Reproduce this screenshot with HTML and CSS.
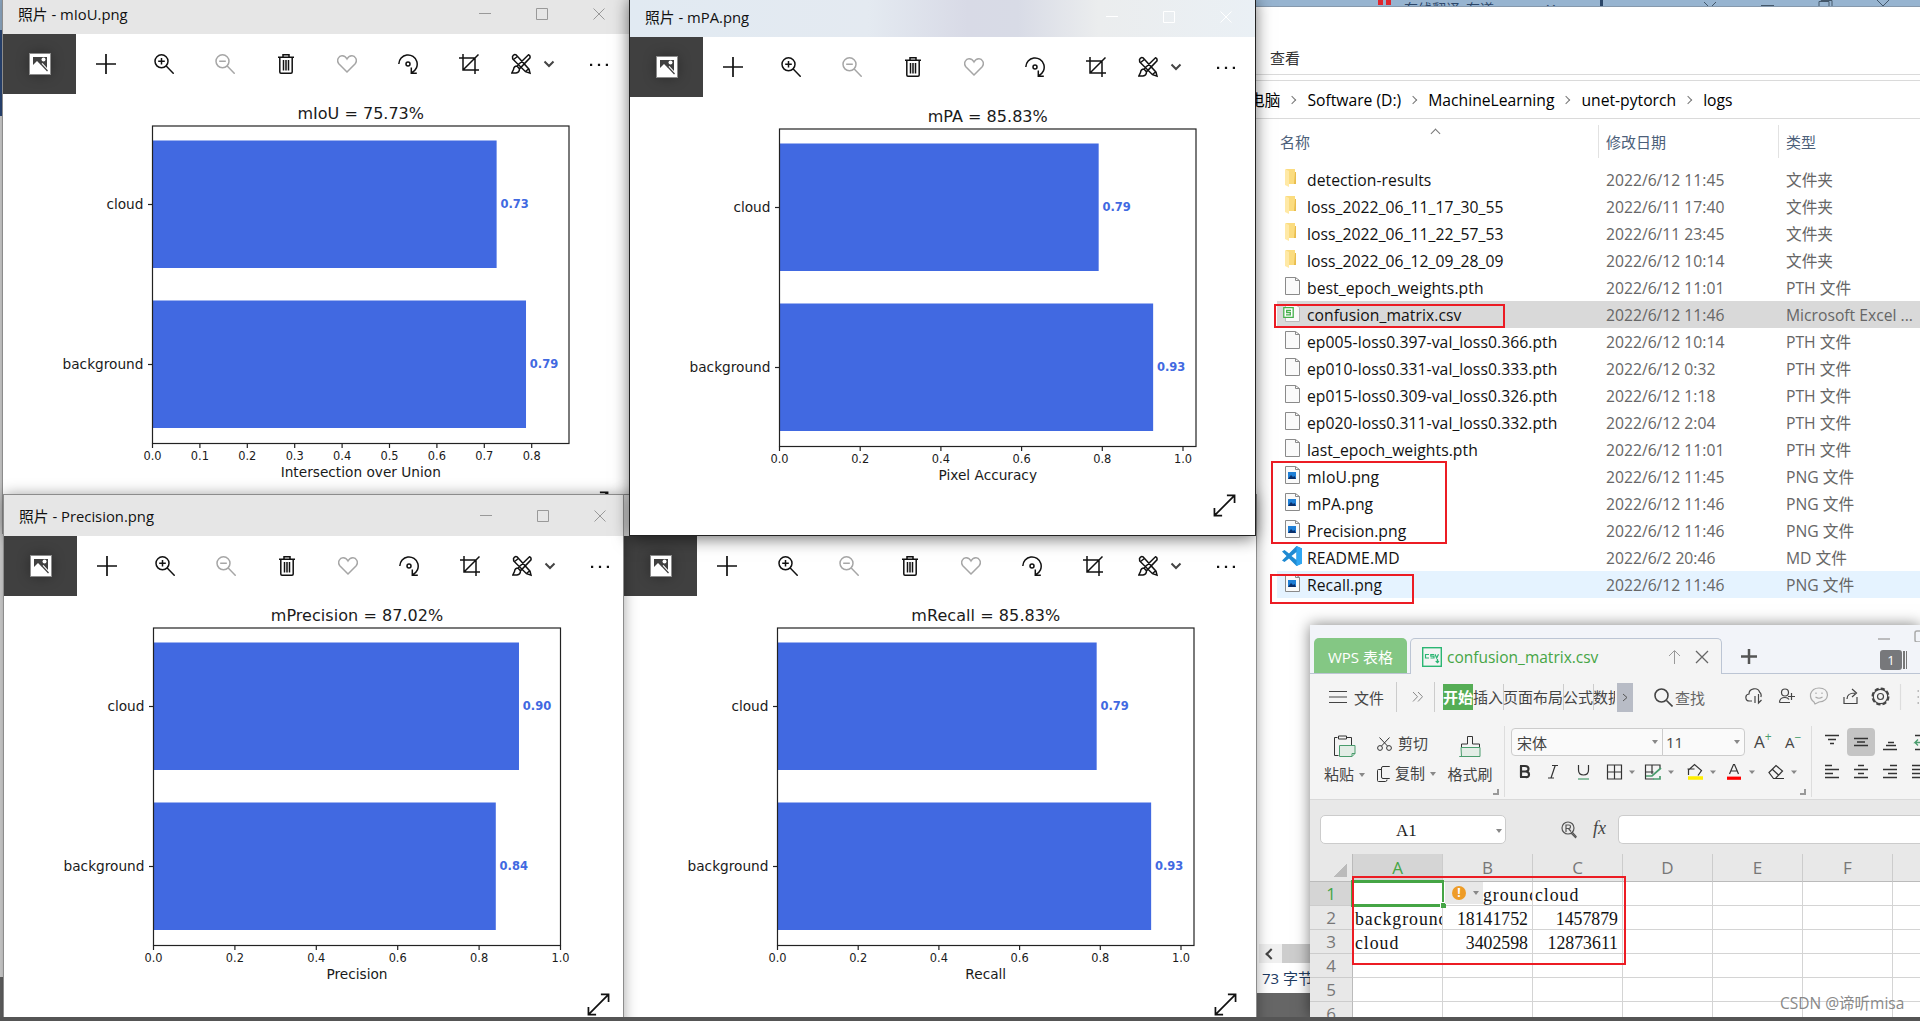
FILE: index.html
```html
<!DOCTYPE html>
<html lang="zh-CN">
<head>
<meta charset="UTF-8">
<meta name="viewport" content="width=device-width, initial-scale=1.0">
<title>unet-pytorch logs</title>
<link rel="stylesheet" href="styles.css">
</head>
<body>

<svg class="defs" width="0" height="0">
    <symbol id="i-photo" viewBox="0 0 20 20"><rect x="1" y="1" width="18" height="18" fill="#fff"/><path fill="#404040" d="M3 3h14v11l-4.500-5-2 1.500L7 7l-4 4z"/><circle cx="13.500" cy="5.500" r="2" fill="#fff"/><path d="M10.500 9.500l7 7.500" stroke="#404040" stroke-width="1.200"/></symbol>
    <symbol id="i-add" viewBox="0 0 20 20"><path d="M10 0v20M0 10h20" stroke-width="1.700"/></symbol>
    <symbol id="i-zoomin" viewBox="0 0 20 20"><circle cx="7.500" cy="7.300" r="6.500"/><path d="M12.200 12l7.500 7.700M7.500 4v6.600M4.200 7.300h6.600"/></symbol>
    <symbol id="i-zoomout" viewBox="0 0 20 20"><circle cx="7.500" cy="7.300" r="6.500"/><path d="M12.200 12l7.500 7.700M4.200 7.300h6.600"/></symbol>
    <symbol id="i-trash" viewBox="0 0 20 20"><path d="M2 3.200h16M7 3V.8h6V3M3.800 3.200V18q0 1.200 1.200 1.200h10q1.200 0 1.200-1.200V3.200M7.500 6v10.500M10 6v10.500M12.500 6v10.500"/></symbol>
    <symbol id="i-heart" viewBox="0 0 20 20"><path d="M10 18L1.800 9.700C-1 6 2 1.500 5.300 1.800 7.500 2 9 3.200 10 5c1-1.800 2.500-3 4.700-3.200C18 1.500 21 6 18.200 9.700z"/></symbol>
    <symbol id="i-rotate" viewBox="0 0 20 20"><path d="M.8 10A9.200 9.200 0 1 1 14 18.500M13.300 13.500v5.700h5.500"/><circle cx="10" cy="10" r="2"/></symbol>
    <symbol id="i-crop" viewBox="0 0 20 20"><path d="M0 4h16v16M4 0v16h16M4 16L19.500.5"/></symbol>
    <symbol id="i-tools" viewBox="0 0 20 20"><path d="M1.500 2.500Q3-.5 5.500 1.200L18 15.200l1 4-4.500-1.500L1.700 5zM14.500 17.500l3.500-3M2 6l5-4M17.500.8q2 .5 1.500 3L8.500 14.800 6 12zM6 12q-3 0-3.500 3.500L.8 19H5q3.500-.5 3.500-4.200"/></symbol>
    <symbol id="i-chev" viewBox="0 0 12 8"><path d="M1.500 1.500L6 6l4.500-4.500" stroke-width="2"/></symbol>
    <symbol id="i-more" viewBox="0 0 20 20"><path fill="#111" stroke="none" d="M1 9.700h2.200v2.200H1zM8.900 9.700h2.200v2.200H8.900zM16.800 9.700H19v2.200h-2.200z"/></symbol>
    <symbol id="i-expand" viewBox="0 0 24 24"><path d="M2 22L22 2M14.500 1.500h8v8M1.500 14.500v8h8" stroke-width="1.800"/></symbol>
    <symbol id="i-min" viewBox="0 0 12 12"><path d="M0 5.500h12"/></symbol>
    <symbol id="i-max" viewBox="0 0 12 12"><path d="M.5.5h11v11H.5z"/></symbol>
    <symbol id="i-close" viewBox="0 0 12 12"><path d="M.5.5l11 11M11.500.5l-11 11"/></symbol>
    <symbol id="f-folder" viewBox="0 0 18 20"><path fill="#fbdc7f" d="M3 1h9v15H3z"/><path fill="#e9bd4e" d="M12 4h1v12h-2z"/><path fill="#ffe9a6" d="M2 1l4 2v16l-4-2z"/></symbol>
    <symbol id="f-page" viewBox="0 0 18 20"><path fill="#fafafa" stroke="#8a8a8a" d="M2.500 1.500h10l4 3v14h-14zM12.500 1.500v3h4"/></symbol>
    <symbol id="f-png" viewBox="0 0 18 20"><path fill="#fafafa" stroke="#8a8a8a" d="M2.500 1.500h10l4 3v14h-14zM12.500 1.500v3h4"/><path fill="#1f7fd6" d="M5 7h8v7H5z"/><path fill="#0a2f6b" d="M5 14l3-4 2 2 1.500-1L13 14z"/></symbol>
    <symbol id="f-csv" viewBox="0 0 18 20"><path fill="#fafafa" stroke="#bbb" d="M2.500 1.500h10l4 3v14h-14z"/><path fill="#fff" stroke="#45b04c" stroke-width="1.300" d="M.8 4.600h9.400v9.800H.8zM8 7.300H3.700v2.200h3.600v2.400H3"/></symbol>
    <symbol id="f-code" viewBox="0 0 20 20"><path fill="#1f8ad2" d="M14.500 0L20 2.500v15L14.500 20 7 12.500 2.500 16 0 14.500 4.500 10 0 5.500 2.500 4 7 7.500zM14.500 6L9.500 10l5 4z"/><path fill="#2fa6f2" d="M14.500 0L20 2.500v15L14.500 20z"/></symbol>
</svg>

<!-- browser strip behind the explorer -->
<div class="tabstrip">
    <i class="logo"></i><span class="tab-name">在线翻译_有道</span><span class="tab-x">✕</span><i class="tab-plus"></i>
    <svg width="220" height="6" fill="none" stroke="#44586b"><path d="M1 2l6 6 6-6M58 5.500h13M116 6V1.500h10V6M118 1.500V.5h11V6M173-1l7 7 7-7"/></svg>
</div>

<section class="explorer">
    <div class="ribbon-tab">查看</div>
    <nav class="crumbs">
        <span class="first">电脑</span><b></b><span>Software (D:)</span><b></b><span>MachineLearning</span><b></b><span>unet-pytorch</span><b></b><span>logs</span>
    </nav>
    <div class="file-head">
        <div class="c-name">名称<i class="sort"></i></div><div class="c-date">修改日期</div><div class="c-type">类型</div>
    </div>
    <div class="files" id="files"></div>
    <div class="hscroll"><span></span><i></i></div>
    <div class="status">73 字节</div>
</section>
<div class="mark mark-csv"></div>
<div class="mark mark-png"></div>
<div class="mark mark-recall"></div>

<section class="photo w-miou" data-chart="miou"></section>
<section class="photo wide w-recall" data-chart="recall"></section>
<section class="photo w-precision" data-chart="precision"></section>
<section class="photo active w-mpa" data-chart="mpa"></section>

<section class="wps">
    <div class="wps-tabs">
        <div class="home">WPS 表格</div>
        <div class="doc">
            <svg width="20" height="20" fill="none" stroke="#2bb673"><rect x=".7" y=".7" width="18.600" height="18.600" stroke-width="1.400"/><path d="M7 7.500H3.500v3.500H7M12 7.500H8.800v1.700H12V11H8.500M13 7.200l1.700 3.800 1.800-3.800M15.500 12v3.500M13.700 14l1.800 1.700 1.500-1.700" stroke-width="1.200"/></svg>
            <span>confusion_matrix.csv</span>
            <svg class="up" width="14" height="16" fill="none" stroke="#999"><path d="M6.500 15V2M1 7l5.500-5.500L12 7"/></svg>
            <svg class="x" width="14" height="14" fill="none" stroke="#666" stroke-width="1.300"><path d="M1 1l12 12M13 1L1 13"/></svg>
        </div>
        <svg class="plus" width="16" height="16" stroke="#555" stroke-width="2.500"><path d="M8 0v15M0 7.500h16"/></svg>
        <div class="wps-ctl">
            <svg width="44" height="12" fill="none" stroke="#aaa" stroke-width="1.500"><path d="M0 9h12"/><rect x="37" y="1" width="14" height="11" rx="2"/></svg>
            <div><b>1</b><i></i></div>
        </div>
    </div>

    <div class="menu">
        <svg width="18" height="14" stroke="#444" stroke-width="1.200"><path d="M0 1.500h18M0 7h18M0 12.500h18"/></svg>
        <span class="file">文件</span>
        <i class="sep"></i>
        <svg class="dbl" width="11" height="10" fill="none" stroke="#888"><path d="M1 0l4.500 4.700L1 9.500M6 0l4.500 4.700L6 9.500"/></svg>
        <i class="sep"></i>
        <div class="menu-items"><b>开始</b><span>插入</span><span>页面布局</span><span>公式</span><span>数据</span></div>
        <div class="menu-more"><svg width="6" height="9" fill="none" stroke="#555"><path d="M1 1l4 3.500L1 8"/></svg></div>
        <svg class="find" width="19" height="19" fill="none" stroke="#444" stroke-width="1.600"><circle cx="7.500" cy="7.500" r="6.500"/><path d="M12.500 12.500l6 6"/></svg>
        <span class="find-t">查找</span>
        <svg class="acts" width="174" height="30" fill="none" stroke="#444" stroke-width="1.200">
            <path d="M7 19H4.500C0 19-.5 12.500 4 12 4 6 13 5 14.500 10q2.500 2 1.300 5M10 21v-7M13.500 12v9l3-3"/>
            <circle cx="40" cy="10.500" r="3.500"/><path d="M34.500 20.500q0-5 5.500-5 3 0 4 2M34.500 20.500h10.500M43 14.500h7M46.500 11v7"/>
            <path stroke="#aaa" d="M69 20q-4-2.500-3.500-8 2-6 8.500-6 8 0 8.500 7-.5 6.500-8.500 7l-4 2zM71 10.500v1.500M77 10.500v1.500M70.500 15q3.500 2.500 7 0"/>
            <path d="M99 15v6.500h13V15M102 17q0-6 8-6M107 7l4.500 4-4.500 4"/>
            <circle cx="135.500" cy="14.500" r="8" stroke-dasharray="4.200 2.080" stroke-width="2"/><circle cx="135.500" cy="14.500" r="7.200"/><circle cx="135.500" cy="14.500" r="3"/>
            <path stroke="#ddd" d="M155.500 2v26"/><path stroke="#bbb" stroke-width="2" d="M173.500 8v2M173.500 14v2M173.500 20v2"/>
        </svg>
    </div>

    <div class="ribbon">
        <div class="clip">
            <div class="big"><svg width="23" height="23" fill="none" stroke="#333"><path d="M4.500 2.500h-3v18h4M14 2.500h4.500V10M5.500 1h8v3h-8z"/><path fill="#e3ede6" stroke="#4a9c6d" d="M6.500 10.500h15.500v8l-3 3H6.500zM22 18.500h-3v3"/></svg><p>粘贴<i class="dd"></i></p></div>
            <div class="col">
                <p><svg width="16" height="14" fill="none" stroke="#333"><circle cx="3" cy="11" r="2.400"/><circle cx="12" cy="11" r="2.400"/><path d="M4.500 9L12.500.5M10.500 9L2.500.5"/></svg>剪切</p>
                <p><svg width="16" height="16" fill="none" stroke="#333"><rect x="4.500" y=".5" width="9.500" height="12" rx="1.500"/><path d="M4 3.500H1.500q-1 0-1 1v10q0 1 1 1h7q1.500 0 1.500-2"/></svg>复制<i class="dd"></i></p>
            </div>
            <div class="big brush"><svg width="23" height="23" fill="none" stroke="#333"><path d="M2.500 12V9h6V1.500h5V9h7v3"/><path fill="#e3ede6" stroke="#4a9c6d" d="M2 12.500h19v9H.5h2z"/></svg><p>格式刷</p></div>
            <i class="corner"></i>
        </div>
        <div class="font">
            <div class="row1">
                <div class="font-name">宋体<i class="dd"></i></div><div class="font-size">11<i class="dd"></i></div>
                <span class="fa">A<sup>+</sup></span><span class="fa fb">A<sup>−</sup></span>
            </div>
            <svg width="300" height="20" fill="none" stroke="#333" stroke-width="1.200">
                <path stroke-width="2.200" d="M9 4h5q3.500 0 3.500 2.800T14 9.500H9.500M10 9.500h4.500q3.500 0 3.500 3T14.500 15H9M10 4v11"/>
                <path d="M41 3.500h6M37 16h6M44.200 3.500L40 16"/>
                <path d="M67.500 3v5q0 5 5 5t5-5V3"/><path stroke="#4a9c6d" d="M67 17h11"/>
                <path d="M96.500 3h14v14h-14zM103.500 3v14M96.500 10h14"/>
                <path d="M149 7V3h-14.500v14h8M134.500 10h8M141 3v9"/><path stroke="#4a9c6d" stroke-width="1.700" d="M135 14h6l9-8M142 17h7v-3"/>
                <path d="M177.500 13V8l6-5.500 7 6-3.500 5M176.500 7h7"/><path stroke="#fe0" stroke-width="3.500" d="M177 16h15"/>
                <path d="M218.500 12l4-9.500h1l4 9.500M220 9h6"/><path stroke="red" stroke-width="3.200" d="M216 16.200h14"/>
                <path d="M258 10.500l7-7 6.500 5.500-7 7.500h-2zM261 7l6.500 6M263 16.500h10"/>
                <path class="tri" d="M118 8.500h6l-3 3.500zM157 8.500h6l-3 3.500zM199 8.500h6l-3 3.500zM238 8.500h6l-3 3.500zM280 8.500h6l-3 3.500z"/>
            </svg>
            <i class="corner"></i>
        </div>
        <div class="align">
            <i class="on"></i>
            <svg width="108" height="72" fill="none" stroke="#333" stroke-width="1.400"><path d="M13 9.500h14M16 13.500h8M18 17.500h4M42 12.500h14M45 16h8M42 19.500h14M76 16.500h6M74 19.500h10M71 23.500h14M13 39.500h7M13 43.500h14M13 47.500h8M13 51.500h14M46 39.500h6M42 43.500h14M46 47.500h6M42 51.500h14M78 39.500h7M71 43.500h14M76 47.500h9M71 51.500h14M100 39.500h9M100 43.500h9M100 47.500h9M100 51.500h9M103 9.500h5M103 23.500h5"/><path stroke="#4a9c6d" d="M108 16.500h-5l3-3m-3 3l3 3"/></svg>
        </div>
    </div>

    <div class="formula">
        <div class="name-box">A1<i class="dd"></i></div>
        <svg width="17" height="18" fill="none" stroke="#555" stroke-width="1.200"><circle cx="7" cy="7" r="6"/><path d="M5 11V4h3q1.500 0 1.500 1.700T8 7.500H5.500M7.500 7.500l2.500 3M11 11l4.500 5"/><path d="M10 12l5 5"/></svg>
        <em>fx</em>
        <div class="fx-input"></div>
    </div>

    <table class="sheet">
        <tr><th class="all"></th><th class="sel">A</th><th>B</th><th>C</th><th>D</th><th>E</th><th>F</th><th></th></tr>
        <tr><th class="sel">1</th><td></td><td class="over">ground</td><td>cloud</td><td></td><td></td><td></td><td></td></tr>
        <tr><th>2</th><td>background</td><td class="num">18141752</td><td class="num">1457879</td><td></td><td></td><td></td><td></td></tr>
        <tr><th>3</th><td>cloud</td><td class="num">3402598</td><td class="num">12873611</td><td></td><td></td><td></td><td></td></tr>
        <tr><th>4</th><td></td><td></td><td></td><td></td><td></td><td></td><td></td></tr>
        <tr><th>5</th><td></td><td></td><td></td><td></td><td></td><td></td><td></td></tr>
        <tr><th>6</th><td></td><td></td><td></td><td></td><td></td><td></td><td></td></tr>
    </table>
    <div class="cursor"><i></i></div>
    <div class="warn"><b>!</b><i class="dd"></i></div>
</section>
<div class="mark mark-sheet"></div>
<div class="watermark">CSDN @谛听misa</div>
<div class="taskbar"></div>

<script>
    const files = [
        ['folder', 'detection-results', '2022/6/12 11:45', '文件夹'],
        ['folder', 'loss_2022_06_11_17_30_55', '2022/6/11 17:40', '文件夹'],
        ['folder', 'loss_2022_06_11_22_57_53', '2022/6/11 23:45', '文件夹'],
        ['folder', 'loss_2022_06_12_09_28_09', '2022/6/12 10:14', '文件夹'],
        ['page', 'best_epoch_weights.pth', '2022/6/12 11:01', 'PTH 文件'],
        ['csv', 'confusion_matrix.csv', '2022/6/12 11:46', 'Microsoft Excel ...', 'selected'],
        ['page', 'ep005-loss0.397-val_loss0.366.pth', '2022/6/12 10:14', 'PTH 文件'],
        ['page', 'ep010-loss0.331-val_loss0.333.pth', '2022/6/12 0:32', 'PTH 文件'],
        ['page', 'ep015-loss0.309-val_loss0.326.pth', '2022/6/12 1:18', 'PTH 文件'],
        ['page', 'ep020-loss0.311-val_loss0.332.pth', '2022/6/12 2:04', 'PTH 文件'],
        ['page', 'last_epoch_weights.pth', '2022/6/12 11:01', 'PTH 文件'],
        ['png', 'mIoU.png', '2022/6/12 11:45', 'PNG 文件'],
        ['png', 'mPA.png', '2022/6/12 11:46', 'PNG 文件'],
        ['png', 'Precision.png', '2022/6/12 11:46', 'PNG 文件'],
        ['code', 'README.MD', '2022/6/2 20:46', 'MD 文件'],
        ['png', 'Recall.png', '2022/6/12 11:46', 'PNG 文件', 'hover']
    ];
    document.getElementById('files').innerHTML = files.map(f => `
        <div class="file-row ${f[4] || ''}">
            <svg class="f-icon"><use href="#f-${f[0]}"/></svg>
            <span class="f-name">${f[1]}</span><span class="f-date">${f[2]}</span><span class="f-type">${f[3]}</span>
        </div>`).join('');

    // unit = pixels for 1.0 on the x axis
    const charts = {
        miou:      { file: 'mIoU.png', title: 'mIoU = 75.73%', tw: 126.5, label: 'Intersection over Union', x: 149.5, w: 416.5, unit: 474, step: 0.1, ticks: 9, cloud: [0.726, '0.73'], bg: [0.788, '0.79'] },
        mpa:       { file: 'mPA.png', title: 'mPA = 85.83%', tw: 120, label: 'Pixel Accuracy', x: 149.5, w: 416.5, unit: 403.5, step: 0.2, ticks: 6, cloud: [0.791, '0.79'], bg: [0.926, '0.93'] },
        precision: { file: 'Precision.png', title: 'mPrecision = 87.02%', tw: 172.5, label: 'Precision', x: 149.5, w: 407, unit: 407, step: 0.2, ticks: 6, cloud: [0.898, '0.90'], bg: [0.841, '0.84'] },
        recall:    { file: 'Recall.png', title: 'mRecall = 85.83%', tw: 149, label: 'Recall', x: 153.5, w: 416.5, unit: 403.5, step: 0.2, ticks: 6, cloud: [0.791, '0.79'], bg: [0.926, '0.93'] }
    };

    function bar(c, name, data, y) {
        const w = data[0] * c.unit;
        return `<rect class="bar" x="${c.x}" y="${y}" width="${w}" height="127.5"/>
            <path class="axis" d="M${c.x - 4.500} ${y + 64}h4.500"/>
            <text class="y-label" x="${c.x - 9}" y="${y + 68.500}">${name}</text>
            <text class="value" x="${c.x + w + 3.800}" y="${y + 67.500}">${data[1]}</text>`;
    }

    function drawChart(c) {
        let out = bar(c, 'cloud', c.cloud, 46.500) + bar(c, 'background', c.bg, 206.500);
        for (let i = 0; i < c.ticks; i++) {
            const x = c.x + i * c.step * c.unit;
            out += `<path class="axis" d="M${x} 349.500v4.500"/><text class="tick" x="${x}" y="366">${(i * c.step).toFixed(1)}</text>`;
        }
        const mid = c.x + c.w / 2;
        return `<svg class="chart">${out}
            <rect class="axis" x="${c.x}" y="32" width="${c.w}" height="317.500"/>
            <text class="title" x="${mid}" y="25" textLength="${c.tw}">${c.title}</text>
            <text class="x-label" x="${mid}" y="383">${c.label}</text></svg>`;
    }

    const tools = ['add', 'zoomin', 'zoomout', 'trash', 'heart', 'rotate', 'crop', 'tools', 'chev', 'more'];
    const icon = n => `<svg class="icon ${n}"><use href="#i-${n}"/></svg>`;
    document.querySelectorAll('.photo').forEach(el => {
        const c = charts[el.dataset.chart];
        el.innerHTML = `
            <header><span>照片 - ${c.file}</span>${['min', 'max', 'close'].map(n => `<div class="ctl">${icon(n)}</div>`).join('')}</header>
            <div class="tools"><div class="see-all">${icon('photo')}</div>${tools.map(n => `<div class="t t-${n}">${icon(n)}</div>`).join('')}</div>
            ${drawChart(c)}${icon('expand')}`;
    });
</script>

</body>
</html>
```
FILE: styles.css
```css
* {
    box-sizing: border-box;
}
body {
    margin: 0;
    width: 1920px;
    height: 1021px;
    position: relative;
    overflow: hidden;
    font-family: "Open Sans", "Noto Sans CJK SC", sans-serif;
    background: linear-gradient(#97b4d0 30px, #2c4a7c 30px, #2c4a7c 116px, #dcdcdc 116px, #dcdcdc 977px, #666 977px);
}
p {
    margin: 0;
}
.defs {
    position: absolute;
}
.dd {
    display: inline-block;
    border: 3px solid transparent;
    border-top: 4px solid #888;
    border-bottom: 0;
}

/* browser strip */
.tabstrip {
    position: absolute;
    left: 1250px;
    top: 0;
    width: 670px;
    height: 6px;
    display: flex;
    align-items: flex-start;
    overflow: hidden;
    background: #97b4d0;
    color: #2b4668;
    font-size: 14px;
    line-height: 14px;
}
.tabstrip .logo {
    width: 13px;
    height: 5px;
    margin-left: 128px;
    border: solid #e0262d;
    border-width: 0 5px;
}
.tab-name {
    width: 96px;
    margin: 2px 0 0 13px;
    white-space: nowrap;
}
.tab-x {
    margin: 2px 0 0 46px;
}
.tab-plus {
    width: 3px;
    height: 6px;
    margin-left: 43px;
    background: #2b4668;
}
.tabstrip svg {
    margin-left: 100px;
}

/* file explorer */
.explorer {
    position: absolute;
    left: 1256px;
    top: 6px;
    width: 664px;
    height: 987px;
    background: #fff;
    border-top: 1px solid #8699ad;
    display: flex;
    flex-direction: column;
}
.ribbon-tab {
    height: 68px;
    padding: 38px 0 0 14px;
    font-size: 15px;
    line-height: 26px;
    color: #333;
    border-bottom: 1px solid #dadada;
}
.crumbs {
    height: 39px;
    margin-top: 5px;
    border: solid #dadada;
    border-width: 1px 0;
    display: flex;
    align-items: center;
    font-size: 15.7px;
    white-space: nowrap;
    overflow: hidden;
}
.crumbs .first {
    margin-left: -7px;
}
.crumbs b {
    width: 6px;
    height: 6px;
    margin: 0 12px 0 9px;
    border: solid #777;
    border-width: 1.500px 1.500px 0 0;
    transform: rotate(45deg);
}
.file-head {
    height: 42px;
    margin: 6px 0 6px;
    display: flex;
    font-size: 15px;
    line-height: 35px;
    color: #4c607a;
}
.file-head div {
    height: 33px;
    position: relative;
}
.c-name {
    width: 343px;
    padding-left: 24px;
    border-right: 1px solid #e2e2e2;
}
.c-date {
    width: 180px;
    padding-left: 7px;
    border-right: 1px solid #e2e2e2;
}
.c-type {
    padding-left: 7px;
}
.sort {
    position: absolute;
    left: 176px;
    top: 5px;
    width: 7px;
    height: 7px;
    border: solid #777;
    border-width: 1px 0 0 1px;
    transform: rotate(45deg);
}
.files {
    margin-left: 21px;
    margin-top: -7px;
}
.file-row {
    height: 27px;
    display: flex;
    align-items: center;
    font-size: 15.7px;
    white-space: nowrap;
    color: #666;
}
.file-row.selected {
    background: #d9d9d9;
}
.file-row.hover {
    background: #e5f3ff;
}
.f-icon {
    width: 20px;
    height: 20px;
    margin: -3px 5px 0 5px;
}
.f-name {
    width: 299px;
    color: #111;
    letter-spacing: .06px;
}
.f-date {
    width: 180px;
}
.hscroll {
    height: 19px;
    margin: auto 0 0 3px;
    display: flex;
    background: #f0f0f0;
}
.hscroll span {
    width: 8px;
    height: 8px;
    margin: 6px 7px 0 8px;
    border: solid #444;
    border-width: 0 0 2px 2px;
    transform: rotate(45deg);
}
.hscroll i {
    flex: 1;
    background: #cdcdcd;
}
.status {
    height: 30px;
    padding-left: 6px;
    font-size: 15px;
    line-height: 31px;
    color: #1d3b62;
}

/* red frames */
.mark {
    position: absolute;
    border: 2px solid #ec1c24;
}
.mark-csv {
    left: 1274px;
    top: 304px;
    width: 231px;
    height: 24px;
}
.mark-png {
    left: 1271px;
    top: 461px;
    width: 176px;
    height: 83px;
}
.mark-recall {
    left: 1270px;
    top: 574px;
    width: 144px;
    height: 30px;
}
.mark-sheet {
    left: 1352px;
    top: 876px;
    width: 274px;
    height: 89px;
}

/* photo windows */
.photo {
    position: absolute;
    width: 627px;
    height: 540px;
    background: #fff;
    outline: 1px solid #8c8c8c;
    box-shadow: 0 0 14px rgba(0, 0, 0, .4);
    display: flex;
    flex-direction: column;
}
.w-miou {
    left: 3px;
    top: -7px;
}
.w-mpa {
    left: 630px;
    top: -4px;
    width: 625px;
}
.w-precision {
    left: 4px;
    top: 495px;
    width: 619px;
}
.w-recall {
    left: 624px;
    top: 495px;
    width: 632px;
}
.photo.active {
    height: 539px;
    outline-color: #222;
    box-shadow: 0 3px 16px rgba(0, 0, 0, .6);
}
.photo header {
    height: 41px;
    padding-left: 15px;
    display: flex;
    align-items: center;
    background: #e6e6e6;
    font-size: 14.800px;
    color: #111;
}
.photo header span {
    width: 438px;
    flex: none;
}
.active header {
    background: linear-gradient(90deg, #e1eaf2, #e4eaf1 38%, #d8dae6 54%, #d8dbe6 62%, #ebedee 75%, #eaf0f5);
}
.ctl {
    width: 57px;
    height: 12px;
    display: flex;
    justify-content: center;
    flex: none;
}
.icon {
    width: 20px;
    height: 20px;
    fill: none;
    stroke: #111;
    stroke-width: 1.500;
    overflow: visible;
}
.ctl .icon {
    width: 12px;
    height: 12px;
    stroke: #999;
    stroke-width: 1;
}
.active .ctl .icon {
    stroke: #fff;
}
.tools {
    height: 60px;
    display: flex;
    align-items: center;
    flex: none;
}
.see-all {
    width: 73px;
    height: 60px;
    display: flex;
    align-items: center;
    justify-content: center;
    flex: none;
    background: #404040;
}
.see-all .icon {
    stroke: none;
}
.t {
    width: 61px;
    height: 20px;
    display: flex;
    justify-content: center;
    align-items: center;
    flex: none;
}
.t-add {
    width: 57px;
    padding-left: 3px;
}
.wide .t-add {
    width: 60px;
    padding: 0;
}
.t-tools {
    width: 44px;
}
.wide .t-tools {
    margin-left: 3px;
}
.t-chev {
    width: 12px;
}
.icon.chev {
    width: 12px;
    height: 8px;
    stroke: #444;
}
.t-more {
    width: 88px;
}
.t .zoomout,
.t .heart {
    stroke: #a6a6a6;
}
.chart {
    width: 100%;
    flex: 1;
    font-family: "DejaVu Sans", sans-serif;
    fill: #1a1a1a;
}
.axis {
    fill: none;
    stroke: #222;
    stroke-width: 1.200;
}
.bar {
    fill: #4169e1;
}
.title {
    font-size: 16px;
    text-anchor: middle;
}
.y-label {
    font-size: 13.700px;
    text-anchor: end;
}
.x-label {
    font-size: 13.700px;
    text-anchor: middle;
}
.tick {
    font-size: 11.400px;
    text-anchor: middle;
}
.value {
    font-size: 11.500px;
    font-weight: bold;
    fill: #4169e1;
}
.icon.expand {
    position: absolute;
    left: 583px;
    top: 498px;
    width: 23px;
    height: 23px;
}
.wide .icon.expand {
    left: 590px;
}

/* spreadsheet */
.wps {
    position: absolute;
    left: 1310px;
    top: 625px;
    width: 610px;
    height: 392px;
    overflow: hidden;
    background: #f4f4f4;
    box-shadow: 0 0 14px rgba(0, 0, 0, .5);
    color: #444;
}
.wps-tabs {
    height: 49px;
    display: flex;
    align-items: flex-end;
    background: linear-gradient(#bcc5d4, #bcc5d4) 0 100% / 100% 1px no-repeat #f2f4f9;
}
.home {
    width: 93px;
    height: 35px;
    margin: 0 3px 1px 4px;
    border-radius: 5px 5px 0 0;
    background: #84c784;
    color: #fff;
    font-size: 15px;
    line-height: 38px;
    text-align: center;
}
.doc {
    width: 312px;
    height: 36px;
    display: flex;
    align-items: center;
    padding-left: 11px;
    background: #f4f4f4;
    border: 1px solid #bcc5d4;
    border-bottom: 0;
    border-radius: 5px 5px 0 0;
    font-size: 15.500px;
    color: #45a545;
}
.doc span {
    width: 221px;
    margin-left: 5px;
}
.doc .x {
    margin-left: 13px;
}
.plus {
    margin: 0 0 9px 19px;
}
.wps-ctl {
    width: 42px;
    height: 44px;
    margin-left: auto;
    overflow: hidden;
}
.wps-ctl svg {
    display: block;
}
.wps-ctl div {
    display: flex;
    align-items: center;
    margin: 8px 0 0 2px;
}
.wps-ctl b {
    width: 22px;
    height: 20px;
    border-radius: 3px;
    background: #77787b;
    color: #fff;
    font-size: 13px;
    font-weight: normal;
    line-height: 20px;
    text-align: center;
}
.wps-ctl i {
    width: 4px;
    height: 18px;
    margin-left: 1px;
    border: solid #777;
    border-width: 0 1px 0 2px;
}
.menu {
    height: 46px;
    display: flex;
    align-items: center;
    padding-left: 19px;
    font-size: 15px;
    white-space: nowrap;
}
.menu > * {
    flex: none;
}
.menu .file {
    margin: 0 12px 0 7px;
}
.sep {
    width: 1px;
    height: 30px;
    background: #ccc;
}
.dbl {
    margin: 0 11px 0 15px;
}
.menu-items {
    width: 172px;
    margin: 0 2px 0 8px;
    display: flex;
    overflow: hidden;
    line-height: 26px;
}
.menu-items b {
    flex: none;
    background: #55ad55;
    color: #fff;
}
.menu-items span {
    flex: none;
    border-right: 1px solid #ccc;
    margin-right: -1px;
}
.menu-more {
    width: 16px;
    height: 29px;
    display: flex;
    align-items: center;
    justify-content: center;
    background: #b8bcc6;
}
.find {
    margin: 0 2px 0 21px;
}
.find-t {
    width: 30px;
    color: #666;
}
.acts {
    margin: 0 0 0 40px;
}
.ribbon {
    height: 80px;
    display: flex;
    padding-top: 6px;
    border-bottom: 1px solid #d9d9d9;
    font-size: 15px;
}
.clip,
.font,
.align {
    height: 71px;
    position: relative;
    border-right: 1px solid #ddd;
    flex: none;
}
.clip {
    width: 195px;
    display: flex;
    padding: 9px 0 0 14px;
}
.clip p {
    display: flex;
    align-items: center;
    height: 25px;
    line-height: 25px;
    white-space: nowrap;
}
.clip .dd {
    margin-left: 5px;
}
.big {
    width: 41px;
    display: flex;
    flex-direction: column;
    align-items: center;
    gap: 4px;
    flex: none;
}
.big.brush {
    width: 46px;
}
.col {
    width: 59px;
    margin: -4px 11px 0 12px;
    flex: none;
}
.col p {
    gap: 5px;
    margin-bottom: 5px;
}
.col .dd {
    margin-left: 0;
}
.corner {
    position: absolute;
    right: 5px;
    bottom: 2px;
    width: 6px;
    height: 6px;
    border: solid #999;
    border-width: 0 2px 2px 0;
}
.font {
    width: 307px;
    padding: 2px 0 0 6px;
}
.row1 {
    display: flex;
    height: 28px;
    margin-bottom: 6px;
}
.font-name,
.font-size {
    display: flex;
    align-items: center;
    justify-content: space-between;
    padding: 0 4px 0 5px;
    background: #fafafa;
    border: 1px solid #ccc;
}
.font-name {
    width: 152px;
    border-radius: 4px 0 0 4px;
}
.font-size {
    width: 83px;
    margin-left: -1px;
    padding-left: 3px;
    border-radius: 0 4px 4px 0;
}
.fa {
    width: 22px;
    margin-left: 9px;
    font-size: 17px;
    line-height: 28px;
    white-space: nowrap;
}
.fb {
    font-size: 15px;
}
.fa sup {
    font-size: 12px;
    line-height: 0;
    color: #4a9c6d;
}
.tri {
    fill: #888;
    stroke: none;
}
.align {
    width: 108px;
    border: 0;
}
.align svg {
    position: relative;
}
.on {
    position: absolute;
    left: 35px;
    top: 2px;
    width: 28px;
    height: 28px;
    border-radius: 4px;
    background: #c4c4c4;
}
.formula {
    height: 54px;
    display: flex;
    align-items: flex-start;
    padding: 15px 0 0 10px;
    background: #e8e8e8;
}
.name-box {
    width: 186px;
    height: 29px;
    display: flex;
    align-items: center;
    padding: 2px 3px 0 75px;
    background: #fff;
    border: 1px solid #ccc;
    border-radius: 5px;
    font: 17px "Liberation Serif", serif;
    color: #222;
}
.name-box .dd {
    margin-left: auto;
}
.formula svg {
    margin: 6px 14px 0 55px;
}
.formula em {
    width: 25px;
    margin-left: 1px;
    font: italic 18px/26px "Liberation Serif", serif;
}
.fx-input {
    flex: 1;
    height: 29px;
    background: #fff;
    border: 1px solid #ccc;
    border-right: 0;
    border-radius: 5px 0 0 5px;
}
.sheet {
    width: 673px;
    table-layout: fixed;
    border-collapse: separate;
    border-spacing: 0;
    background: #fff;
}
.sheet th {
    width: 90px;
    height: 24px;
    padding: 0;
    border: solid #ccc;
    border-width: 0 1px 1px 0;
    background: #e8e8e8;
    color: #777;
    font-size: 17px;
    font-weight: normal;
    line-height: 23px;
}
.sheet th:first-child {
    width: 43px;
    padding-right: 0;
    border-right-color: #bbb;
}
.sheet tr:first-child th {
    height: 28px;
    border-bottom-color: #bbb;
}
.sheet .all {
    background: linear-gradient(135deg, transparent 50%, #bbb 50%) 24px 9px / 13px 14px no-repeat #e8e8e8;
}
.sheet th.sel {
    background: #d5d5d5;
    color: #45a545;
}
.sheet td {
    height: 24px;
    padding: 4px 4px 0 2px;
    border: solid #d4d4d4;
    border-width: 0 1px 1px 0;
    overflow: hidden;
    white-space: nowrap;
    font: 17.800px/19px "Liberation Serif", serif;
    letter-spacing: .95px;
    color: #111;
}
.sheet .num {
    text-align: right;
    letter-spacing: 0;
    padding-right: 4px;
}
.sheet .over {
    padding-left: 40px;
}
.cursor {
    position: absolute;
    left: 41px;
    top: 255px;
    width: 93px;
    height: 27px;
    border: 2px solid #45a545;
    border-top-width: 3px;
    border-bottom-width: 3px;
}
.cursor i {
    position: absolute;
    right: -4px;
    bottom: -4px;
    width: 6px;
    height: 6px;
    background: #45a545;
    border: solid #fff;
    border-width: 1px 0 0 1px;
}
.warn {
    position: absolute;
    left: 135px;
    top: 257px;
    width: 38px;
    height: 22px;
    padding-left: 7px;
    display: flex;
    align-items: center;
    gap: 7px;
    background: #e8e8e8;
}
.warn b {
    width: 14px;
    height: 14px;
    border-radius: 50%;
    background: #ee9c28;
    color: #fff;
    font-size: 12px;
    line-height: 14px;
    text-align: center;
}
.watermark {
    position: absolute;
    left: 1780px;
    top: 991px;
    font-size: 15.500px;
    line-height: 24px;
    color: #888;
    white-space: nowrap;
}
.taskbar {
    position: absolute;
    left: 0;
    top: 1017px;
    width: 1920px;
    height: 4px;
    background: #555;
}
```
